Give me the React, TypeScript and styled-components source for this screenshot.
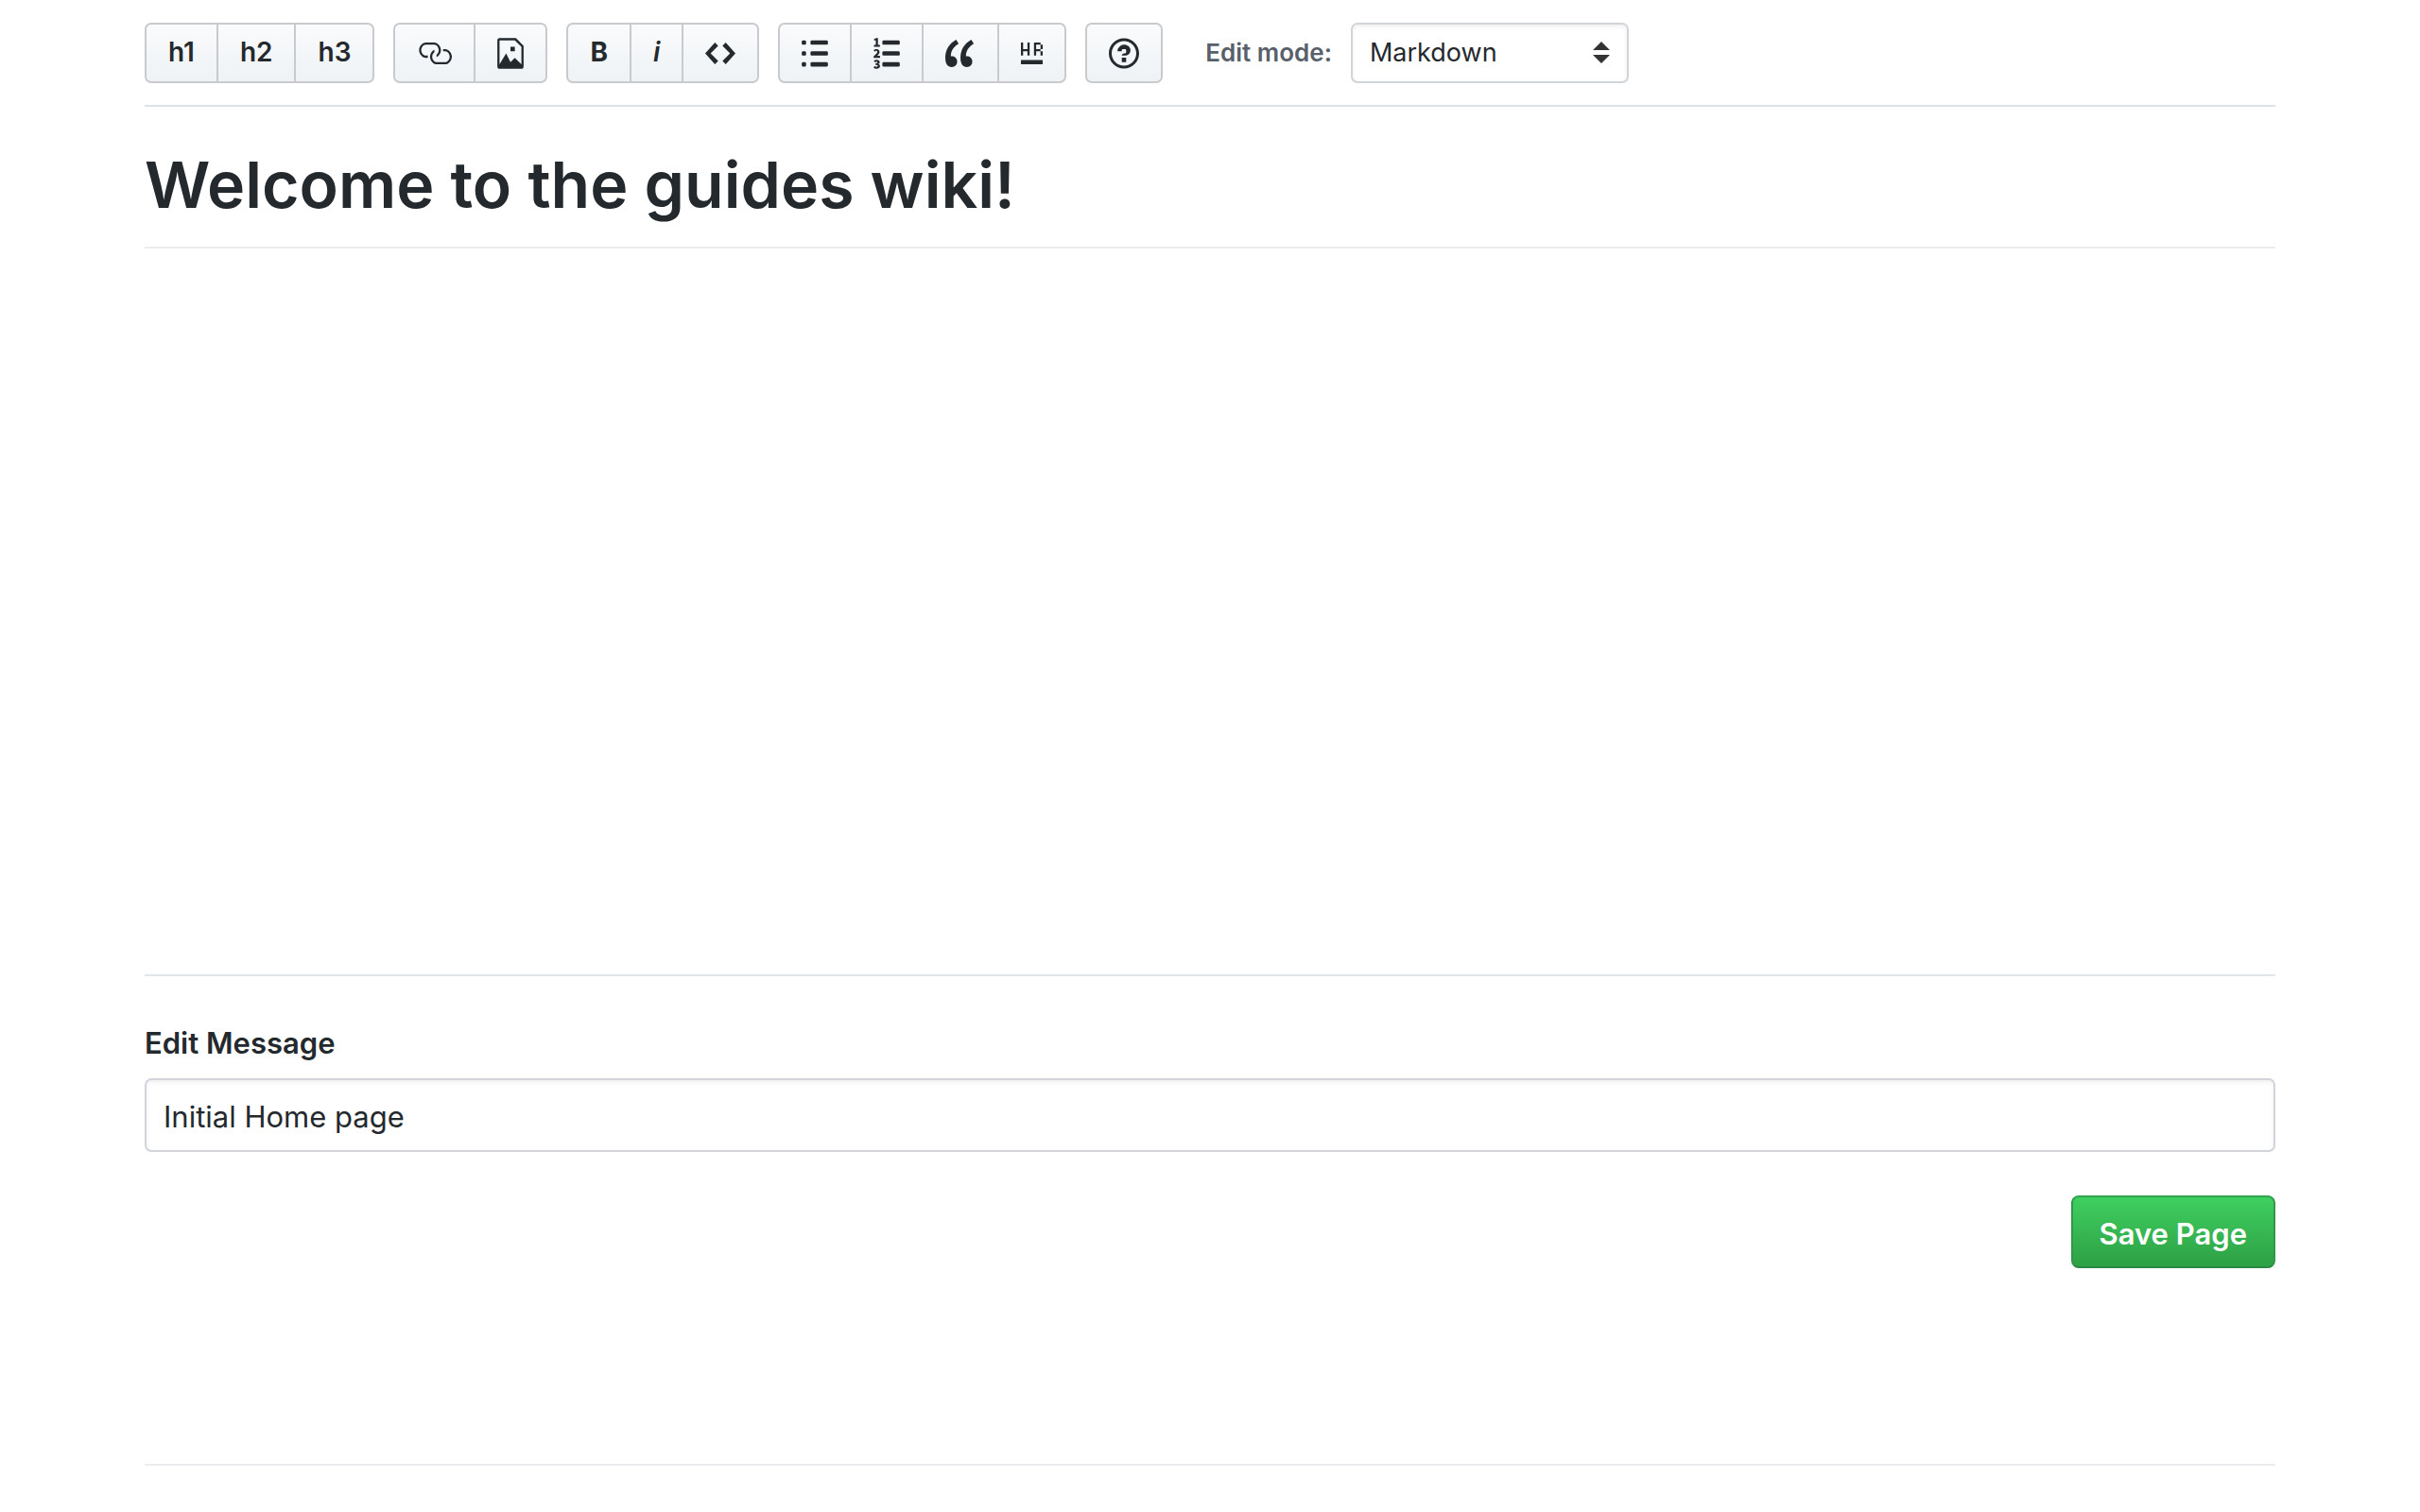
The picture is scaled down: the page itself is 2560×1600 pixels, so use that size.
import React from 'react';
import styled, { createGlobalStyle } from 'styled-components';

const GlobalStyle = createGlobalStyle`
  *, *::before, *::after { box-sizing: border-box; }
  body {
    margin: 0;
    background: #fff;
    color: #24292e;
    font-family: Inter, "Liberation Sans", sans-serif;
  }
`;

const Page = styled.div`
  padding: 24px 153px 49px;
`;

const Toolbar = styled.div`
  display: flex;
  align-items: center;
  gap: 20px;
  padding-bottom: 23px;
  border-bottom: 2px solid #dfe2e5;
`;

const ButtonGroup = styled.div`
  display: flex;
`;

const ToolButton = styled.button<{ $bold?: boolean; $italic?: boolean }>`
  display: flex;
  align-items: center;
  justify-content: center;
  height: 64px;
  margin: 0;
  padding: 0 23px;
  border: 2px solid #c8cacd;
  background: linear-gradient(180deg, #fafbfc 0%, #eff3f6 90%);
  background-clip: padding-box;
  color: inherit;
  font-family: inherit;
  font-size: 28px;
  font-weight: ${(p) => (p.$bold ? 700 : 600)};
  font-style: ${(p) => (p.$italic ? 'italic' : 'normal')};
  cursor: pointer;

  & + & { margin-left: -2px; }
  &:first-child { border-top-left-radius: 7px; border-bottom-left-radius: 7px; }
  &:last-child { border-top-right-radius: 7px; border-bottom-right-radius: 7px; }
`;

const ToolText = styled.span`
  padding-bottom: 2px;
`;

const Icon = styled.svg`
  display: block;
  height: 37px;
  fill: currentColor;
`;

const ModeField = styled.div`
  display: flex;
  align-items: center;
  gap: 20px;
  margin-left: 25px;
`;

const ModeLabel = styled.label`
  padding-bottom: 2px;
  color: #586069;
  font-size: 26px;
  font-weight: 600;
`;

const SelectBox = styled.div`
  position: relative;
  width: 294px;
`;

const ModeSelect = styled.select`
  appearance: none;
  display: block;
  width: 100%;
  height: 64px;
  margin: 0;
  padding: 0 54px 2px 18px;
  border: 2px solid #d1d5da;
  border-radius: 7px;
  background: #fff;
  box-shadow: inset 0 2px 4px rgba(27, 31, 35, 0.075);
  color: inherit;
  font-family: inherit;
  font-size: 27px;
`;

const SelectArrows = styled.svg`
  position: absolute;
  top: 20px;
  right: 20px;
  width: 18px;
  height: 23px;
  fill: #333;
  pointer-events: none;
`;

const Editor = styled.main`
  min-height: 920px;
  padding-top: 40px;
  border-bottom: 2px solid #e1e4e8;
`;

const Title = styled.h1`
  margin: 0;
  padding-bottom: 24px;
  border-bottom: 2px solid #eaecef;
  font-size: 68px;
  font-weight: 600;
  line-height: 84px;
`;

const MessageForm = styled.form`
  display: flex;
  flex-direction: column;
  padding: 48px 0 207px;
  border-bottom: 2px solid #eaecef;
`;

const MessageLabel = styled.label`
  margin-bottom: 14px;
  font-size: 31px;
  font-weight: 600;
  line-height: 46px;
`;

const MessageInput = styled.input`
  height: 78px;
  margin: 0;
  padding: 2px 18px 0;
  border: 2px solid #d1d5da;
  border-radius: 7px;
  background: #fff;
  box-shadow: inset 0 2px 4px rgba(27, 31, 35, 0.075);
  color: inherit;
  font-family: inherit;
  font-size: 31px;
`;

const SaveButton = styled.button`
  align-self: flex-end;
  height: 77px;
  margin: 46px 0 0;
  padding: 4px 28px 0;
  border: 2px solid;
  border-color: #33a350 #2f974a #2a8a42;
  border-radius: 8px;
  background: linear-gradient(180deg, #3fcf60 0%, #2fa246 95%);
  color: #fff;
  font-family: inherit;
  font-size: 31px;
  font-weight: 600;
  cursor: pointer;
`;

type IconProps = { units: number; width: number; d: string };

const Glyph = ({ units, width, d }: IconProps) => (
  <Icon viewBox={`0 0 ${units} 16`} width={width} aria-hidden="true">
    <path fillRule="evenodd" d={d} />
  </Icon>
);

type Tool = {
  label: string;
  text?: string;
  bold?: boolean;
  italic?: boolean;
  icon?: IconProps;
};

const groups: Tool[][] = [
  [
    { label: 'Heading 1', text: 'h1' },
    { label: 'Heading 2', text: 'h2' },
    { label: 'Heading 3', text: 'h3' },
  ],
  [
    {
      label: 'Link',
      icon: {
        units: 16,
        width: 37,
        d: 'M4 9h1v1H4c-1.5 0-3-1.69-3-3.5S2.55 3 4 3h4c1.45 0 3 1.69 3 3.5 0 1.41-.91 2.72-2 3.25V8.59c.58-.45 1-1.27 1-2.09C10 5.28 8.98 4 8 4H4c-.98 0-2 1.22-2 2.5S3 9 4 9zm9-3h-1v1h1c1 0 2 1.22 2 2.5S13.98 12 13 12H9c-.98 0-2-1.22-2-2.5 0-.83.42-1.64 1-2.09V6.25c-1.09.53-2 1.84-2 3.25C6 11.31 7.55 13 9 13h4c1.45 0 3-1.69 3-3.5S14.5 6 13 6z',
      },
    },
    {
      label: 'Image',
      icon: {
        units: 12,
        width: 28,
        d: 'M6 5h2v2H6V5zm6-.5V14c0 .55-.45 1-1 1H1c-.55 0-1-.45-1-1V2c0-.55.45-1 1-1h7.5L12 4.5zM11 5L8 2H1v11l3-5 2 4 2-2 3 3V5z',
      },
    },
  ],
  [
    { label: 'Bold', text: 'B', bold: true },
    { label: 'Italic', text: 'i', italic: true },
    {
      label: 'Code',
      icon: {
        units: 14,
        width: 32,
        d: 'M9.5 3L8 4.5 11.5 8 8 11.5 9.5 13 14 8 9.5 3zm-5 0L0 8l4.5 5L6 11.5 2.5 8 6 4.5 4.5 3z',
      },
    },
  ],
  [
    {
      label: 'Unordered list',
      icon: {
        units: 12,
        width: 28,
        d: 'M2 13c0 .59 0 1-.59 1H.59C0 14 0 13.59 0 13c0-.59 0-1 .59-1h.81c.59 0 .59.41.59 1H2zm2.59-9h6.81c.59 0 .59-.41.59-1 0-.59 0-1-.59-1H4.59C4 2 4 2.41 4 3c0 .59 0 1 .59 1zM1.41 7H.59C0 7 0 7.41 0 8c0 .59 0 1 .59 1h.81c.59 0 .59-.41.59-1 0-.59 0-1-.59-1h.01zm0-5H.59C0 2 0 2.41 0 3c0 .59 0 1 .59 1h.81c.59 0 .59-.41.59-1 0-.59 0-1-.59-1h.01zm10 5H4.59C4 7 4 7.41 4 8c0 .59 0 1 .59 1h6.81c.59 0 .59-.41.59-1 0-.59 0-1-.59-1h.01zm0 5H4.59C4 12 4 12.41 4 13c0 .59 0 1 .59 1h6.81c.59 0 .59-.41.59-1 0-.59 0-1-.59-1h.01z',
      },
    },
    {
      label: 'Ordered list',
      icon: {
        units: 12,
        width: 28,
        d: 'M12 13c0 .59 0 1-.59 1H4.59C4 14 4 13.59 4 13c0-.59 0-1 .59-1h6.81c.59 0 .59.41.59 1H12zM4.59 4h6.81c.59 0 .59-.41.59-1 0-.59 0-1-.59-1H4.59C4 2 4 2.41 4 3c0 .59 0 1 .59 1zm6.81 3H4.59C4 7 4 7.41 4 8c0 .59 0 1 .59 1h6.81c.59 0 .59-.41.59-1 0-.59 0-1-.59-1zM2 1h-.72c-.3.19-.58.25-1.03.34V2H1v2.14H.16V5h2.75v-.86H2V1zm.25 8.13c-.17 0-.45.03-.66.06.53-.56 1.14-1.25 1.14-1.89-.02-.78-.56-1.3-1.36-1.3-.59 0-.97.2-1.38.64l.58.58c.19-.19.38-.38.64-.38.28 0 .48.16.48.52 0 .53-.77 1.2-1.7 2.06V10h3l-.09-.88h-.66l.01.01zm-.08 3.78v-.03c.44-.19.64-.47.64-.86 0-.7-.56-1.11-1.44-1.11-.48 0-.89.19-1.28.52l.55.64c.25-.2.44-.31.69-.31.27 0 .42.13.42.36 0 .27-.2.44-.86.44v.75c.83 0 .98.17.98.47 0 .25-.23.38-.58.38-.28 0-.56-.14-.81-.38l-.48.66c.3.36.77.56 1.41.56.83 0 1.53-.41 1.53-1.16 0-.5-.31-.81-.77-.94v.01z',
      },
    },
    {
      label: 'Quote',
      icon: {
        units: 14,
        width: 32,
        d: 'M6.16 3.5C3.73 5.06 2.55 6.67 2.55 9.36c.16-.05.3-.05.44-.05 1.27 0 2.5.86 2.5 2.41 0 1.61-1.03 2.61-2.5 2.61-1.9 0-2.99-1.52-2.99-4.25 0-3.8 1.75-6.53 5.02-8.42L6.16 3.5zm7 0c-2.43 1.56-3.61 3.17-3.61 5.86.16-.05.3-.05.44-.05 1.27 0 2.5.86 2.5 2.41 0 1.61-1.03 2.61-2.5 2.61-1.89 0-2.98-1.52-2.98-4.25 0-3.8 1.75-6.53 5.02-8.42l1.14 1.84h-.01z',
      },
    },
    {
      label: 'Horizontal rule',
      icon: {
        units: 10,
        width: 23,
        d: 'M1 7h2v2h1V3H3v3H1V3H0v6h1V7zm9 2V7H9v2h1zm0-3V4H9v2h1zM7 6V4h2V3H6v6h1V7h2V6H7zm-7 7h10v-2H0v2z',
      },
    },
  ],
  [
    {
      label: 'Help',
      icon: {
        units: 14,
        width: 32,
        d: 'M6 10h2v2H6v-2zm4-3.5C10 8.64 8 9 8 9H6c0-.55.45-1 1-1h.5c.28 0 .5-.22.5-.5v-1c0-.28-.22-.5-.5-.5h-1c-.28 0-.5.22-.5.5V7H4c0-1.5 1.5-3 3-3s3 1 3 2.5zM7 2.3c3.14 0 5.7 2.56 5.7 5.7s-2.56 5.7-5.7 5.7A5.71 5.71 0 0 1 1.3 8c0-3.14 2.56-5.7 5.7-5.7zM7 1C3.14 1 0 4.14 0 8s3.14 7 7 7 7-3.14 7-7-3.14-7-7-7z',
      },
    },
  ],
];

export default function App() {
  return (
    <>
      <GlobalStyle />
      <Page>
        <Toolbar role="toolbar" aria-label="Formatting">
          {groups.map((tools) => (
            <ButtonGroup key={tools[0].label}>
              {tools.map((tool) => (
                <ToolButton
                  key={tool.label}
                  type="button"
                  aria-label={tool.label}
                  $bold={tool.bold}
                  $italic={tool.italic}
                >
                  {tool.icon ? <Glyph {...tool.icon} /> : <ToolText>{tool.text}</ToolText>}
                </ToolButton>
              ))}
            </ButtonGroup>
          ))}
          <ModeField>
            <ModeLabel htmlFor="edit-mode">Edit mode:</ModeLabel>
            <SelectBox>
              <ModeSelect id="edit-mode" defaultValue="Markdown">
                <option>Markdown</option>
              </ModeSelect>
              <SelectArrows viewBox="0 0 18 23" aria-hidden="true">
                <path d="M9 0l9 9H0zM9 23L0 14h18z" />
              </SelectArrows>
            </SelectBox>
          </ModeField>
        </Toolbar>

        <Editor>
          <Title>Welcome to the guides wiki!</Title>
        </Editor>

        <MessageForm onSubmit={(event) => event.preventDefault()}>
          <MessageLabel htmlFor="edit-message">Edit Message</MessageLabel>
          <MessageInput id="edit-message" type="text" defaultValue="Initial Home page" />
          <SaveButton type="submit">Save Page</SaveButton>
        </MessageForm>
      </Page>
    </>
  );
}
